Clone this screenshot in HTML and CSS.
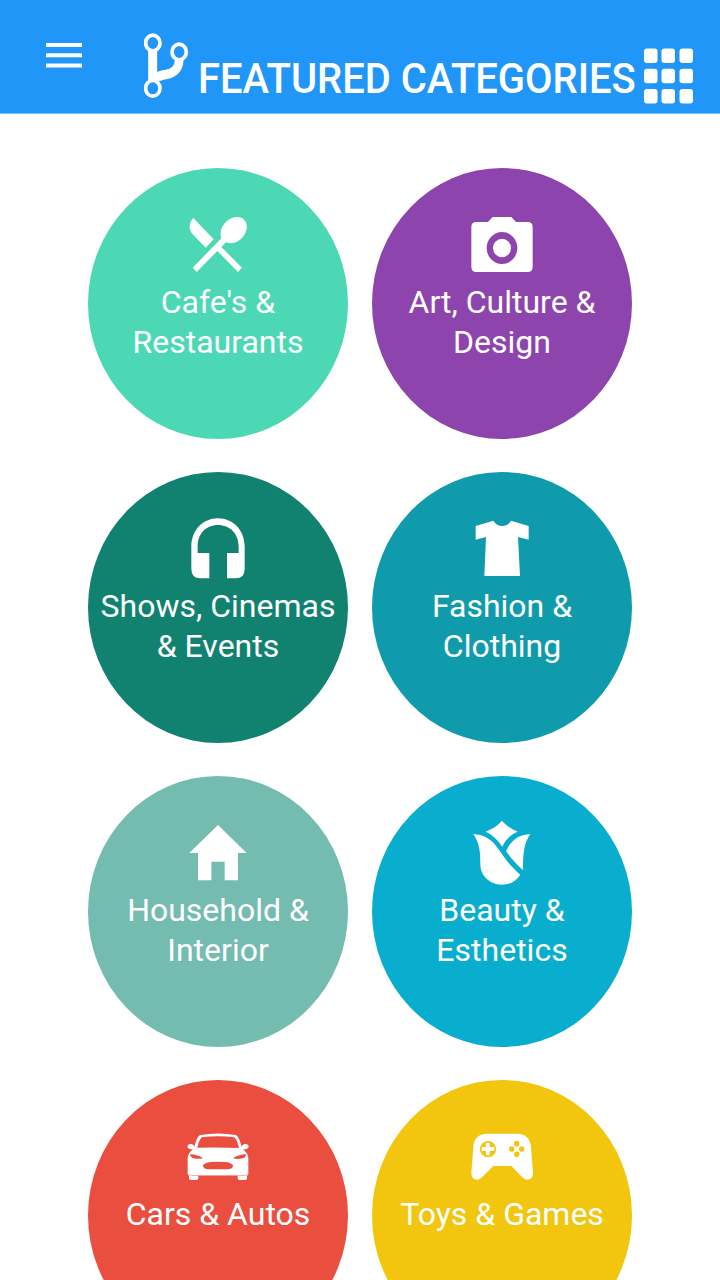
FILE: index.html
```html
<!DOCTYPE html>
<html lang="en">
<head>
<meta charset="utf-8">
<title>Featured Categories</title>
<link rel="stylesheet" href="styles.css">
</head>
<body>
<header class="bar">
  <svg class="menu" viewBox="0 0 36 26"><path d="M0 .9h36v4H0zM0 11.300h36v4H0zM0 21.600h36v4H0z"/></svg>
  <svg class="fork" viewBox="41.500 36 136 200">
    <g class="line"><ellipse cx="68" cy="69" rx="21.500" ry="23.500"/><ellipse cx="147" cy="96" rx="21.500" ry="23.500"/><ellipse cx="68" cy="205" rx="21.500" ry="23.500"/></g>
    <path d="M54 90h27v66c14-7 28-5 39-11 11-6 14-16 14-28h26c0 25-9 43-29 53-17 9-34 7-48 16l-29-2z"/>
  </svg>
  <h1 class="title"><span class="title-text">FEATURED CATEGORIES</span></h1>
  <svg class="apps" viewBox="0 -.5 49 56">
    <g><rect width="13.500" height="14.500" rx="3"/><rect x="17.500" width="13.500" height="14.500" rx="3"/><rect x="35.500" width="13.500" height="14.500" rx="3"/></g>
    <g><rect y="20.300" width="13.500" height="14.500" rx="3"/><rect x="17.500" y="20.300" width="13.500" height="14.500" rx="3"/><rect x="35.500" y="20.300" width="13.500" height="14.500" rx="3"/></g>
    <g><rect y="40.500" width="13.500" height="14.500" rx="3"/><rect x="17.500" y="40.500" width="13.500" height="14.500" rx="3"/><rect x="35.500" y="40.500" width="13.500" height="14.500" rx="3"/></g>
  </svg>
</header>
<main class="grid">
  <a class="tile cafe">
    <svg class="icon" viewBox="-6 3 300 240"><path d="M70 54L131 118 107 143 68 103C56 89 55 70 70 54zM68 203L154 115C148 97 154 77 171 63C188 49 211 47 223 60C235 73 232 95 218 112C204 128 185 134 168 127L154 141 216 203 204 216 142 153 80 216z"/></svg>
    <span class="label">Cafe's &amp;<br>Restaurants</span>
  </a>
  <a class="tile art">
    <svg class="icon" viewBox="6 3 300 240"><path fill-rule="evenodd" d="M128 51h56l14 15h35q15 0 15 15v119q0 16-15 16H79q-15 0-15-16V81q0-15 15-15h35zM156 96a46 48 0 1 0 0 96a46 48 0 1 0 0-96z"/><ellipse cx="156" cy="144" rx="27" ry="28"/></svg>
    <span class="label">Art, Culture &amp;<br>Design</span>
  </a>
  <a class="tile shows">
    <svg class="icon" viewBox="-6 0 300 240"><path d="M64 125C64 76 98 40 144 40S224 76 224 125v66q0 29-27 29h-26v-76h35v-19C206 86 180 60 144 60S83 86 83 125v19h35v76H91q-27 0-27-29z"/></svg>
    <span class="label">Shows, Cinemas<br>&amp; Events</span>
  </a>
  <a class="tile fashion">
    <svg class="icon" viewBox="6 0 300 240"><path d="M77 63l53-16q10 16 27 16t26-16l53 16v41l-32-8 6 117H103l5-117-31 8z"/></svg>
    <span class="label">Fashion &amp;<br>Clothing</span>
  </a>
  <a class="tile house">
    <svg class="icon" viewBox="-6 -3 300 240"><path d="M144 45l86 84h-26v82h-40v-56h-40v56H84v-82H58z"/></svg>
    <span class="label">Household &amp;<br>Interior</span>
  </a>
  <a class="tile beauty">
    <svg class="icon" viewBox="6 -3 300 240"><path d="M156 32c13 15 29 25 47 33-22 9-35 23-46 45-14-20-28-35-50-45 20-8 36-18 49-33zM70 72c29 2 52 13 70 38 24 33 42 61 71 84-13 20-32 30-56 30-35 0-64-26-64-61 0-37-2-63-21-91zM241 72c-19 28-22 56-22 108-19-16-34-34-51-56 14-32 36-50 73-52z"/></svg>
    <span class="label">Beauty &amp;<br>Esthetics</span>
  </a>
  <a class="tile cars">
    <svg class="icon" viewBox="-6 -6 300 240"><path fill-rule="evenodd" d="M52 95q2-9 12-8 7 1 9 8C79 74 84 62 91 60q53-9 106 0c8 3 13 17 18 35q2-7 9-8 11-1 12 8 0 7-17 8 15 12 16 25v49q0 3-4 5v8q0 5-5 5h-18q-5 0-5-5v-8H85v8q0 5-5 5H62q-5 0-5-5v-8q-4-2-4-5v-49q2-15 16-25-17-1-17-8zM82 98q62-2 125 1-5-24-14-32-49-7-98 0-9 11-13 31zM60 118q2 10 11 12 16 3 28 0-15-11-39-12zM228 118q-24 1-39 12 14 4 29 0 10-3 10-12zM99 153q1-13 45-13t45 13q-2 10-16 10h-58q-13 0-16-10z"/><path class="seam" d="M55 179q15 4 32 3h114q18 1 32-3"/></svg>
    <span class="label">Cars &amp; Autos</span>
  </a>
  <a class="tile toys">
    <svg class="icon" viewBox="6 -6 300 240"><path fill-rule="evenodd" d="M111 56h91c25 0 39 16 41 39l6 80q0 19-18 19-7 0-14-7l-33-34h-54l-34 34q-7 7-14 7-18 0-18-19l6-80c2-24 16-39 41-39zM114 78a24 24 0 1 0 0 49a24 24 0 1 0 0-49zM108 83h11v13h14v12h-14v13h-11v-13H95V96h13z"/><g class="buttons"><ellipse cx="200" cy="86" rx="8" ry="8.500"/><ellipse cx="185" cy="102" rx="8" ry="8.500"/><ellipse cx="215" cy="102" rx="8" ry="8.500"/><ellipse cx="200" cy="118" rx="8" ry="8.500"/></g></svg>
    <span class="label">Toys &amp; Games</span>
  </a>
</main>
</body>
</html>
```
FILE: styles.css
```css
* { box-sizing: border-box; }
body {
  display: flex;
  flex-direction: column;
  height: 100vh;
  margin: 0;
  background: #fff;
  color: #fff;
  font-family: Roboto, sans-serif;
  overflow: hidden;
}
svg { display: block; flex: none; fill: currentColor; }
.bar {
  display: flex;
  flex: none;
  align-items: flex-start;
  height: 114px;
  padding-left: 46px;
  background: #2196f9;
  border-bottom: 1px solid #7dc1fb;
}
.menu { width: 36px; height: 26px; margin-top: 42px; }
.fork { width: 45.330px; height: 66.670px; margin: 32px 0 0 61.700px; }
.line { fill: none; stroke: currentColor; stroke-width: 11; }
.title {
  width: 438px;
  margin: 54px 0 0 9.300px;
  font-size: 42px;
  line-height: 50px;
  font-weight: 500;
  white-space: nowrap;
}
.title-text { display: inline-block; transform-origin: left; transform: scaleX(.951); }
.apps { width: 49px; height: 56px; margin: 48px 0 0 7.700px; }
.grid {
  display: grid;
  flex: 1;
  min-height: 0;
  grid-template-columns: 260px 260px;
  grid-auto-rows: 271px;
  gap: 33px 24px;
  justify-content: center;
  align-content: start;
  padding-top: 54px;
  overflow: hidden;
}
.tile {
  display: flex;
  flex-direction: column;
  align-items: center;
  padding-top: 33px;
  border-radius: 50%;
}
.icon { width: 100px; height: 80px; }
.label {
  margin-top: 1px;
  font-size: 32px;
  line-height: 40px;
  text-align: center;
  white-space: nowrap;
}
.cafe { background: #4cd8b5; }
.art { background: #8e44ad; }
.shows { background: #10826f; }
.fashion { background: #0f9bac; }
.house { background: #74bcb0; }
.beauty { background: #09adcd; }
.cars { background: #e94e3e; }
.toys { background: #f2c60f; }
.seam { fill: none; stroke: #e94e3e; stroke-width: 1.500; }
.buttons { fill: #f2c60f; }
```
